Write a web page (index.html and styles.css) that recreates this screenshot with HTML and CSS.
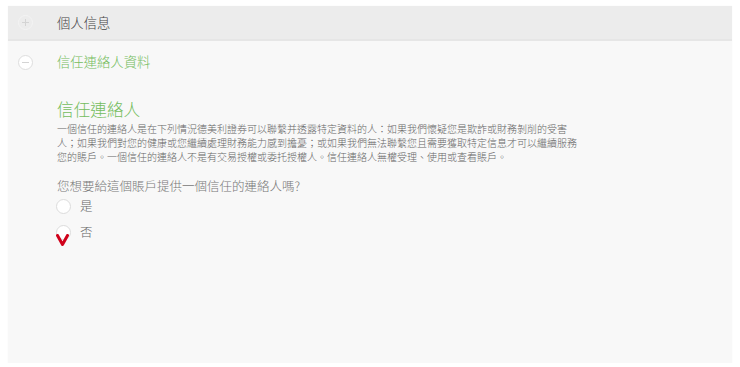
FILE: index.html
```html
<!DOCTYPE html>
<html lang="zh-Hant">
<head>
<meta charset="utf-8">
<title>信任連絡人資料</title>
<link rel="stylesheet" href="styles.css">
</head>
<body>
<div class="panel">
  <div class="acc-head collapsed">
    <span class="toggle plus"></span>
    <span class="acc-title">個人信息</span>
  </div>
  <div class="acc-head open">
    <span class="toggle minus"></span>
    <span class="acc-title green">信任連絡人資料</span>
  </div>
  <div class="acc-body">
    <h2 class="heading">信任連絡人</h2>
    <p class="desc">一個信任的連絡人是在下列情況德美利證券可以聯繫并透露特定資料的人：如果我們懷疑您是欺詐或財務剝削的受害人；如果我們對您的健康或您繼續處理財務能力感到擔憂；或如果我們無法聯繫您且需要獲取特定信息才可以繼續服務您的賬戶。一個信任的連絡人不是有交易授權或委托授權人。信任連絡人無權受理、使用或查看賬戶。</p>
    <p class="question">您想要給這個賬戶提供一個信任的連絡人嗎?</p>
    <div class="options">
      <label class="option"><span class="radio"></span><span class="opt-text">是</span></label>
      <label class="option"><span class="radio"></span><span class="opt-text">否</span>
        <svg class="check" width="13" height="12" viewBox="0 0 13 12"><path d="M1.5 1.5 L6.5 10.5 L11.5 1.5" fill="none" stroke="#d0021b" stroke-width="3" stroke-linecap="round" stroke-linejoin="round"/></svg>
      </label>
    </div>
  </div>
</div>
</body>
</html>
```
FILE: styles.css
```css
html, body {
  margin: 0;
  padding: 0;
  background: #ffffff;
}
body {
  font-family: "Noto Sans CJK TC", "Noto Sans", sans-serif;
  color: #555;
}
.panel {
  margin: 6px 8px 0 8px;
  width: 724px;
  height: 357px;
  background: #f8f8f8;
  box-shadow: 0 0 1px rgba(0,0,0,0.06);
}
.acc-head {
  display: flex;
  align-items: center;
  padding-left: 10px;
  box-sizing: border-box;
}
.acc-head.collapsed {
  height: 35px;
  background: #ececec;
  border-bottom: 2px solid #e6e6e6;
}
.acc-head.open {
  height: 42px;
}
.toggle {
  width: 15px;
  height: 15px;
  border-radius: 50%;
  box-sizing: border-box;
  position: relative;
  margin-right: 24px;
  flex: none;
}
.toggle.plus {
  border: 1px solid #f4f4f4;
  background: #ececec;
}
.toggle.minus {
  border: 1px solid #dedede;
  background: #ffffff;
}
.toggle::before,
.toggle::after {
  content: "";
  position: absolute;
  background: #d4d4d4;
}
.toggle::before {
  left: 3px;
  right: 3px;
  top: 6px;
  height: 1px;
}
.toggle.plus::after {
  top: 3px;
  bottom: 3px;
  left: 6px;
  width: 1px;
}
.toggle.minus::after {
  display: none;
}
.acc-title {
  font-size: 13.33px;
  color: #444;
  line-height: 18px;
  font-weight: 300;
}
.acc-title.green {
  color: #74bd5d;
}
.acc-body {
  padding: 15px 0 0 49px;
}
.heading {
  margin: 0;
  font-weight: 300;
  font-size: 16.67px;
  line-height: 22px;
  color: #74bd5d;
}
.desc {
  margin: 2px 0 0 0;
  width: 524px;
  font-size: 10px;
  line-height: 14px;
  color: #666;
  font-weight: 300;
}
.question {
  margin: 13px 0 0 0;
  font-size: 12.5px;
  line-height: 18px;
  color: #777;
  font-weight: 300;
}
.options {
  display: flex;
  flex-direction: column;
  gap: 6px;
  margin-top: 1px;
}
.option {
  position: relative;
  display: flex;
  align-items: center;
  height: 20px;
  margin-left: -1px;
}
.radio {
  width: 15px;
  height: 15px;
  border-radius: 50%;
  border: 1px solid #dcdcdc;
  background: #ffffff;
  box-sizing: border-box;
  margin-right: 9px;
  flex: none;
}
.opt-text {
  font-size: 12.5px;
  color: #666;
  line-height: 18px;
  font-weight: 300;
}
.check {
  position: absolute;
  left: 0;
  top: 12px;
}
```
